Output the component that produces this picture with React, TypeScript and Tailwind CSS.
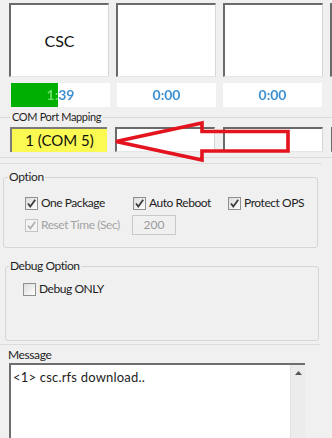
import React from "react";

const FONT = "font-['Lato','Liberation_Sans',sans-serif]";

function Check({ checked = true, disabled = false }: { checked?: boolean; disabled?: boolean }) {
  return (
    <span
      className={
        "inline-flex w-[13px] h-[13px] shrink-0 items-center justify-center border " +
        (disabled
          ? "border-[#c4c4c4] bg-[#f4f4f4]"
          : "border-[#8e8f8f] bg-gradient-to-br from-[#dcdcdc] to-[#ffffff]")
      }
    >
      {checked && (
        <svg width="11" height="11" viewBox="0 0 11 11">
          <path
            d="M2 5.5 L4.3 8.6 L9.2 1.8"
            fill="none"
            stroke={disabled ? "#b0b0b0" : "#3c3c3c"}
            strokeWidth="1.8"
          />
        </svg>
      )}
    </span>
  );
}

function CheckLabel({ label, checked = true, disabled = false, className = "" }: { label: string; checked?: boolean; disabled?: boolean; className?: string }) {
  return (
    <div className={"flex items-center gap-[3px] " + className}>
      <Check checked={checked} disabled={disabled} />
      <span className={"text-[12px] leading-[14px] tracking-[-0.45px] " + (disabled ? "text-[#a3a3a3]" : "text-[#1e1e1e]")}>{label}</span>
    </div>
  );
}

function Timer({ text, pct = 0 }: { text: string; pct?: number }) {
  return (
    <div className="relative w-[99px] h-[24px] bg-white shrink-0">
      {pct > 0 && <div className="absolute left-0 top-0 h-full bg-[#00b000]" style={{ width: `${pct}%` }} />}
      <div className="relative w-full h-full flex items-center justify-center">
        <span
          className="block w-full text-center text-[14px] leading-[24px] font-bold bg-clip-text text-transparent"
          style={{ backgroundImage: `linear-gradient(to right, #6fe06f 0%, #6fe06f ${pct}%, #3b8fd0 ${pct}%, #3b8fd0 100%)` }}
        >
          {text}
        </span>
      </div>
    </div>
  );
}

export default function App() {
  const sunken = "border-t-2 border-l-2 border-r border-b border-t-[#6a6a6a] border-l-[#6a6a6a] border-r-[#d6d6d6] border-b-[#e6e6e6]";
  return (
    <div className={"relative w-[332px] h-[438px] overflow-hidden bg-[#f0f0f0] text-[#1e1e1e] " + FONT}>
      {/* top boxes */}
      <div className="flex gap-[7px] pl-[9px] pt-[3px]">
        <div className={"w-[100px] h-[74px] shrink-0 bg-white flex items-center justify-center text-[16px] text-[#111] " + sunken}>CSC</div>
        <div className={"w-[100px] h-[74px] shrink-0 bg-white " + sunken}></div>
        <div className={"w-[100px] h-[74px] shrink-0 bg-white " + sunken}></div>
        <div className={"w-[100px] h-[74px] shrink-0 bg-white " + sunken}></div>
      </div>

      {/* timers */}
      <div className="flex gap-[7px] pl-[11px] mt-[6px]">
        <Timer text="1:39" pct={47} />
        <Timer text="0:00" />
        <Timer text="0:00" />
      </div>

      {/* COM port mapping */}
      <div className="flex items-center mt-[4px] h-[12px]">
        <div className="w-[10px] h-px bg-[#d9d9d9]" />
        <span className="text-[11px] leading-[12px] tracking-[-0.35px] px-[2px] text-[#1e1e1e]">COM Port Mapping</span>
        <div className="flex-1 h-px bg-[#d9d9d9]" />
      </div>
      <div className="flex gap-[8px] pl-[10px] mt-[4px]">
        <div className="w-[97px] h-[25px] shrink-0 bg-[#fafa52] border-t-2 border-l-2 border-t-[#7a7a7a] border-l-[#7a7a7a] flex items-center justify-center text-[15px] text-[#111]">
          1 (COM 5)
        </div>
        <div className={"w-[100px] h-[25px] shrink-0 bg-white " + sunken}></div>
        <div className={"w-[100px] h-[25px] shrink-0 bg-white " + sunken}></div>
        <div className={"w-[100px] h-[25px] shrink-0 bg-white " + sunken}></div>
      </div>
      <div className="mt-[5px] h-px bg-[#dadada]" />
      <div className="mt-[5px] h-px bg-[#dedede] mr-[10px]" />

      {/* Option */}
      <fieldset className="ml-[3px] w-[315px] h-[78px] mt-[6px] border border-[#d5d5d5] rounded-[3px] p-0">
        <legend className="ml-[4px] px-[1px] text-[12px] leading-[14px] tracking-[-0.3px]">Option</legend>
        <div className="pl-[21px]">
          <div className="flex mt-[12px]">
            <CheckLabel label="One Package" className="w-[108px]" />
            <CheckLabel label="Auto Reboot" className="w-[95px]" />
            <CheckLabel label="Protect OPS" />
          </div>
          <div className="flex items-center mt-[5px]">
            <CheckLabel label="Reset Time (Sec)" disabled className="w-[107px]" />
            <div className="w-[44px] h-[20px] border border-[#c9c9c9] bg-[#f0f0f0] flex items-center justify-center text-[12px] text-[#9a9a9a]">200</div>
          </div>
        </div>
      </fieldset>

      {/* Debug Option */}
      <fieldset className="ml-[5px] w-[314px] h-[82px] mt-[11px] border border-[#d5d5d5] rounded-[3px] p-0">
        <legend className="ml-[3px] px-[1px] text-[12px] leading-[14px] tracking-[-0.45px]">Debug Option</legend>
        <div className="pl-[17px]">
          <CheckLabel label="Debug ONLY" checked={false} className="mt-[9px]" />
        </div>
      </fieldset>

      <div className="mt-[3px] h-px bg-[#dcdcdc] mr-[12px]" />

      {/* Message */}
      <div className="ml-[8px] mt-[3px] text-[12px] leading-[14px] tracking-[-0.4px]">Message</div>
      <div className="ml-[9px] mt-[1px] w-[296px] h-[80px] flex bg-white border-t-2 border-l-2 border-t-[#6e6e6e] border-l-[#6e6e6e]">
        <div className="flex-1 pl-[2px] pt-[5px] text-[13px] leading-[15px] tracking-[0.2px] text-[#1e1e1e]">&lt;1&gt; csc.rfs download..</div>
        <div className="w-[15px] bg-[#ececec] border-l border-[#e2e2e2] flex justify-center pt-[6px]">
          <svg width="7" height="4" viewBox="0 0 7 4">
            <path d="M0 4 L3.5 0 L7 4 Z" fill="#555" />
          </svg>
        </div>
      </div>

      {/* red arrow overlay */}
      <svg className="absolute left-0 top-0 pointer-events-none" width="332" height="438" viewBox="0 0 332 438">
        <path
          d="M116 141.5 L202 123 L202 131.5 L288 131.5 L288 151 L202 151 L202 160 Z"
          fill="none"
          stroke="#e3141d"
          strokeWidth="3.6"
          strokeLinejoin="miter"
        />
      </svg>
    </div>
  );
}
